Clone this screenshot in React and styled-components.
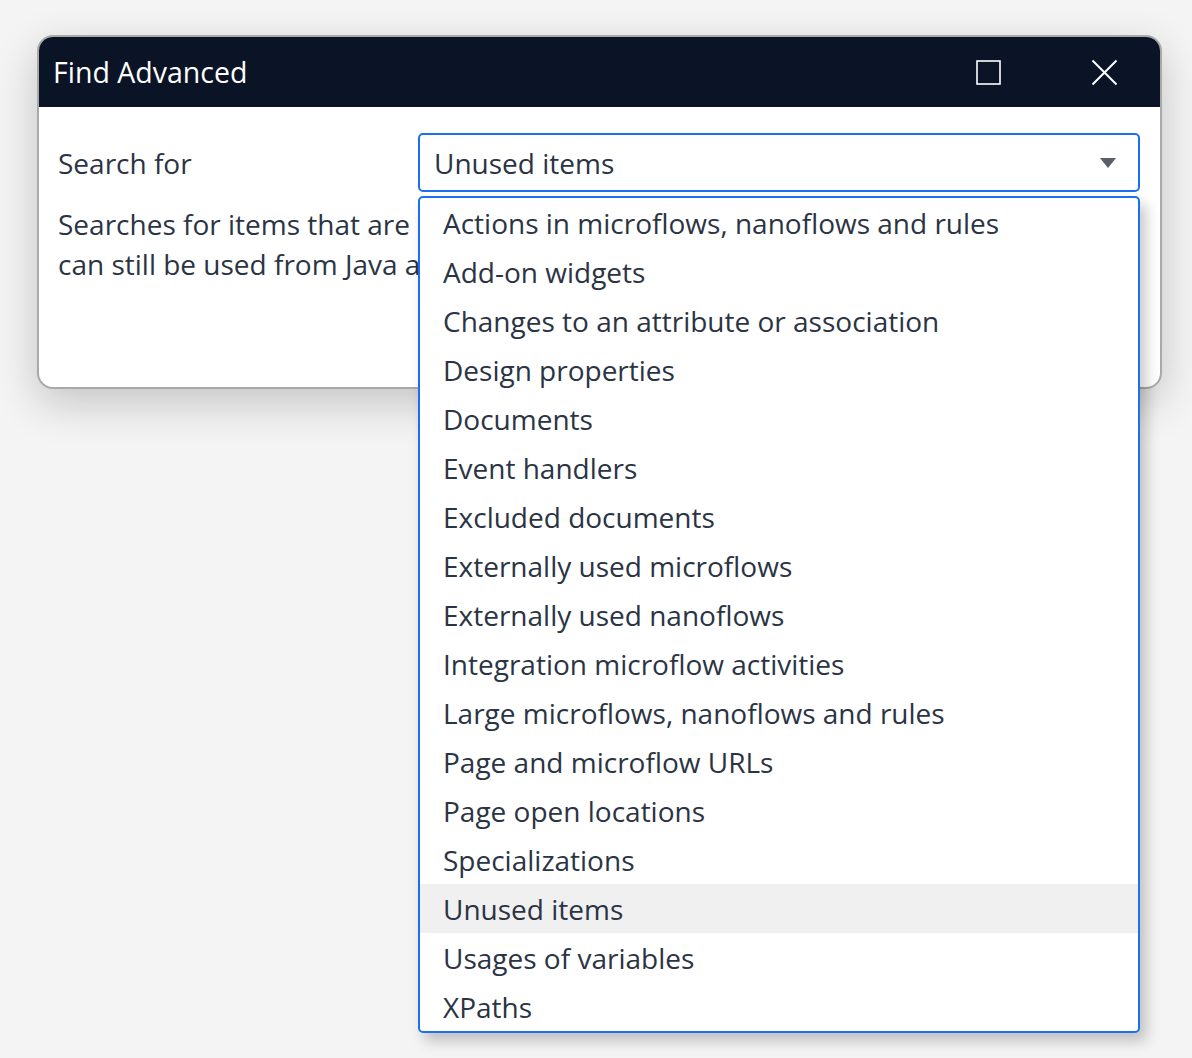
import React from 'react';
import styled, { createGlobalStyle } from 'styled-components';

const GlobalStyle = createGlobalStyle`
  html, body {
    margin: 0;
    padding: 0;
    background: #f4f4f4;
  }
  body {
    font-family: 'Open Sans', 'Noto Sans', sans-serif;
    color: #2b3444;
  }
`;

const options = [
  'Actions in microflows, nanoflows and rules',
  'Add-on widgets',
  'Changes to an attribute or association',
  'Design properties',
  'Documents',
  'Event handlers',
  'Excluded documents',
  'Externally used microflows',
  'Externally used nanoflows',
  'Integration microflow activities',
  'Large microflows, nanoflows and rules',
  'Page and microflow URLs',
  'Page open locations',
  'Specializations',
  'Unused items',
  'Usages of variables',
  'XPaths',
];

export default function App() {
  const selected = 'Unused items';

  return (
    <Page>
      <GlobalStyle />
      <Dialog>
        <TitleBar>
          <Title>Find Advanced</Title>
          <WindowButtons>
            <WindowButton aria-label="Maximize">
              <svg width="25" height="25" viewBox="0 0 25 25">
                <rect x="1" y="1" width="23" height="23" fill="none" stroke="#fff" strokeWidth="1.6" />
              </svg>
            </WindowButton>
            <WindowButton aria-label="Close">
              <svg width="27" height="27" viewBox="0 0 27 27">
                <path d="M1.5 1.5 L25.5 25.5 M25.5 1.5 L1.5 25.5" stroke="#fff" strokeWidth="2" />
              </svg>
            </WindowButton>
          </WindowButtons>
        </TitleBar>
        <Body>
          <Row>
            <Label>Search for</Label>
            <SelectWrap>
              <Select>
                <span>{ selected }</span>
                <svg width="16" height="10" viewBox="0 0 16 10">
                  <path d="M0 0 L16 0 L8 10 Z" fill="#595f6a" />
                </svg>
              </Select>
              <Menu>
                { options.map((o) => (
                  <Option key={ o } active={ o === selected }>{ o }</Option>
                )) }
              </Menu>
            </SelectWrap>
          </Row>
          <Description>
            Searches for items that are not used in the app. Note that these items
            <br />
            can still be used from Java actions or JavaScript actions.
          </Description>
        </Body>
      </Dialog>
    </Page>
  );
}

const Page = styled.div`
  min-height: 1058px;
  padding: 35px 0 0 37px;
  box-sizing: border-box;
`;

const Dialog = styled.div`
  width: 1125px;
  height: 354px;
  box-sizing: border-box;
  border: 2px solid #a9a9a9;
  border-radius: 16px;
  background: #fff;
  box-shadow: 0 14px 44px rgba(0, 0, 0, 0.2);
  display: flex;
  flex-direction: column;
`;

const TitleBar = styled.div`
  height: 70px;
  background: #0b1426;
  border-radius: 14px 14px 0 0;
  display: flex;
  align-items: center;
  justify-content: space-between;
  padding-left: 14px;
`;

const Title = styled.div`
  color: #fff;
  font-size: 28.5px;
`;

const WindowButtons = styled.div`
  display: flex;
  align-items: center;
  gap: 90px;
  padding-right: 42px;
`;

const WindowButton = styled.div`
  display: flex;
  align-items: center;
  justify-content: center;
`;

const Body = styled.div`
  padding: 26px 20px 0 19px;
  display: flex;
  flex-direction: column;
`;

const Row = styled.div`
  display: flex;
  align-items: center;
`;

const Label = styled.div`
  width: 360px;
  font-size: 28px;
`;

const SelectWrap = styled.div`
  position: relative;
  flex: 1;
`;

const Select = styled.div`
  height: 59px;
  box-sizing: border-box;
  border: 2px solid #1d6ff2;
  border-radius: 5px;
  display: flex;
  align-items: center;
  justify-content: space-between;
  padding: 0 22px 0 14px;
  font-size: 28px;
`;

const Menu = styled.div`
  position: absolute;
  top: 63px;
  left: 0;
  right: 0;
  z-index: 10;
  background: #fff;
  border: 2px solid #1d6ff2;
  border-radius: 5px;
  box-shadow: 6px 8px 14px rgba(0, 0, 0, 0.22);
  overflow: hidden;
`;

const Option = styled.div`
  height: 49px;
  display: flex;
  align-items: center;
  padding-left: 23px;
  font-size: 28px;
  background: ${ (p) => (p.active ? '#f0f0f0' : 'transparent') };
`;

const Description = styled.div`
  margin-top: 12px;
  width: 360px;
  font-size: 28px;
  line-height: 40px;
  white-space: nowrap;
  overflow: hidden;
`;
